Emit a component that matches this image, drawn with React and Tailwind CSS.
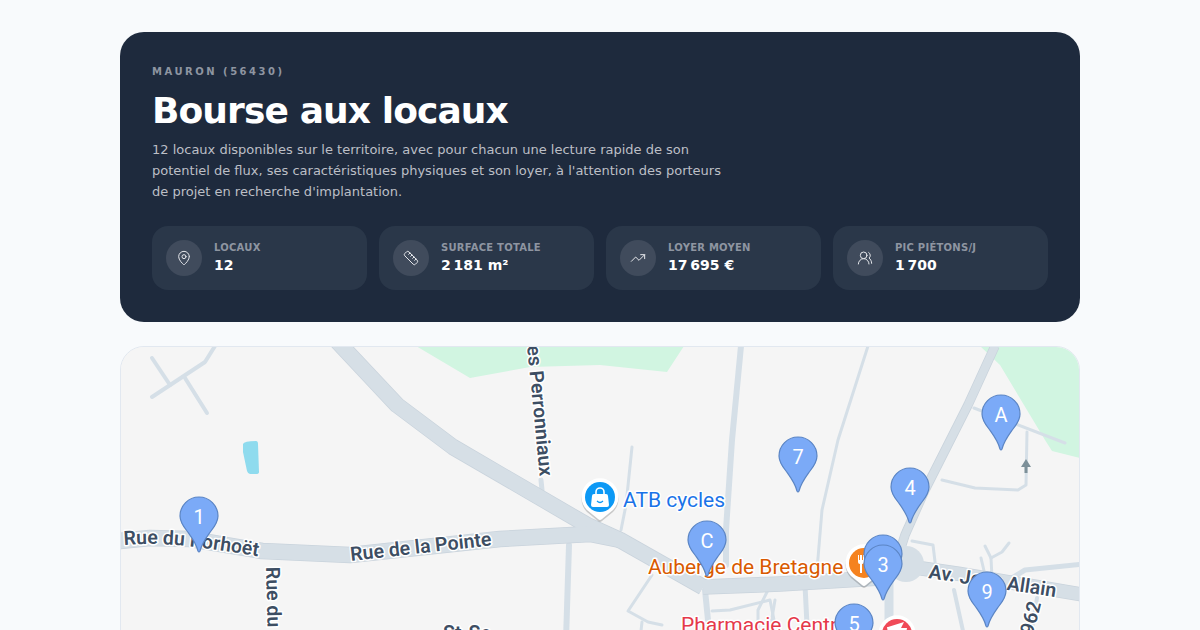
import { MapPin, Ruler, TrendingUp, UsersRound } from 'lucide-react';

const stats = [
  { label: 'Locaux', value: '12', Icon: MapPin },
  { label: 'Surface totale', value: '2\u202f181 m²', Icon: Ruler },
  { label: 'Loyer moyen', value: '17\u202f695 €', Icon: TrendingUp },
  { label: 'Pic piétons/j', value: '1\u202f700', Icon: UsersRound },
];

// main roads: [path, width]
const roads = [
  ['M336 340 L397 405 L453 447 L587 525 L620 540 L703 587', 15],
  ['M120 541 L150 538 L190 539 L262 551 L350 555 L500 539 L590 534 L620 540', 15],
  ['M703 587 L780 584 L880 578 L905 566', 14],
  ['M905 566 L960 574 L1085 595', 13],
  ['M995 346 L968 405 L925 490 L905 535 L897 560', 8],
];

const lanes = [
  ['M152 397 L205 362 L215 346', 4],
  ['M152 358 L170 385', 4],
  ['M185 378 L207 413', 4],
  ['M541 480 L542 490', 5],
  ['M632 447 L626 505 L621 530', 3],
  ['M741 346 L732 440 L726 530 L726 565', 6],
  ['M569 545 L566 640', 6],
  ['M652 575 L628 611 L648 622 L662 625', 3],
  ['M642 622 L640 640', 3],
  ['M705 590 L710 640', 6],
  ['M712 611 L730 610 L770 600 L775 625', 3],
  ['M768 590 L758 610 L758 640', 3],
  ['M775 600 L770 630', 3],
  ['M805 585 L807 625', 5],
  ['M868 346 L838 440 L822 510 L817 570', 3],
  ['M974 408 L1065 443', 3],
  ['M942 480 L975 488 L1018 490 L1026 485 L1027 432', 3],
  ['M912 541 L933 545 L936 570', 3],
  ['M981 558 L985 575', 3],
  ['M985 546 L991 558 L1002 552 L1009 543', 3],
  ['M991 558 L992 578', 3],
  ['M954 590 L965 640', 4],
  ['M1012 578 L1025 570 L1085 564', 5],
  ['M889 575 L889 640', 9],
  ['M1037 598 L1030 640', 4],
];

// pins, bottom to top
const pins = [
  { x: 199, y: 497, label: '1' },
  { x: 707, y: 521, label: 'C' },
  { x: 798, y: 437, label: '7' },
  { x: 910, y: 468, label: '4' },
  { x: 1001, y: 395, label: 'A' },
  { x: 883, y: 535, label: '' },
  { x: 883, y: 545, label: '3' },
  { x: 987, y: 572, label: '9' },
  { x: 854, y: 604, label: '5' },
];

const roboto = { fontFamily: 'Roboto, sans-serif' };

function Pin({ x, y, label }) {
  return (
    <g transform={`translate(${x} ${y})`}>
      <path
        d="M-1 54 C-3 46 -7 41 -12 34 C-16 29 -19 25 -19 19 A19 19 0 0 1 19 19 C19 25 16 29 12 34 C7 41 3 46 1 54 Q0 56 -1 54 Z"
        fill="#7baaf7"
        stroke="#5b85c4"
        strokeWidth="1.2"
      />
      <text x="0" y="26.500" textAnchor="middle" fontSize="20" fill="#ffffff" style={roboto}>{label}</text>
    </g>
  );
}

function Poi({ x, y, color }) {
  const shape = 'M-2 22 L-13 13 A18.500 18.500 0 1 1 13 13 L2 22 Q0 24 -2 22 Z';
  return (
    <g transform={`translate(${x} ${y})`}>
      <path d={shape} fill="#000000" opacity="0.18" transform="translate(0 2)" />
      <path d={shape} fill="#ffffff" />
      <circle cx="0" cy="0" r="15" fill={color} />
    </g>
  );
}

function MapCanvas() {
  return (
    <svg viewBox="121 347 958 460" className="block w-full h-[460px]">
      <rect x="121" y="347" width="958" height="460" fill="#f5f5f5" />
      <path d="M416 346 L470 378 L530 367 L600 365 L667 372 L684 346 Z" fill="#d1f5e1" />
      <path d="M980 346 L1080 346 L1080 458 L1052 451 L1045 440 L1000 365 Z" fill="#d1f5e1" />
      <path d="M243 444 Q244 441 256 441 Q258 441 258 444 L259 472 Q259 474 256 474 L250 474 Q248 474 247 471 L243 452 Z" fill="#8fdbee" />

      {lanes.map(([d, w], i) => (
        <path key={i} d={d} fill="none" stroke="#d5dfe7" strokeWidth={w} strokeLinecap="round" strokeLinejoin="round" />
      ))}
      {roads.map(([d, w], i) => (
        <path key={i} d={d} fill="none" stroke="#c9d3dc" strokeWidth={w + 1.5} strokeLinejoin="round" />
      ))}
      {roads.map(([d, w], i) => (
        <path key={i} d={d} fill="none" stroke="#d6dfe6" strokeWidth={w} strokeLinejoin="round" />
      ))}
      <circle cx="906" cy="564" r="18" fill="#d6dfe6" />
      <path d="M1026 459 L1031 467 L1027.500 467 L1027.500 473 L1024.500 473 L1024.500 467 L1021 467 Z" fill="#7d9099" />

      <defs>
        <path id="porhoet" d="M124 545 C160 542 190 545 262 557" />
        <path id="pointe" d="M351 561 L495 545" />
        <path id="perron" d="M527 346 L531 385 L540 480" />
        <path id="ruedu" d="M266 567 L268 640" />
        <path id="allain" d="M928 578 L1062 598" />
        <path id="d962" d="M1030 648 L1041 604" />
      </defs>
      <g fontSize="19.500" fontWeight="600" fill="#3d4e63" stroke="#ffffff" strokeWidth="3" strokeLinejoin="round" style={{ ...roboto, paintOrder: 'stroke' }}>
        <text><textPath href="#porhoet">Rue du Porhoët</textPath></text>
        <text><textPath href="#pointe">Rue de la Pointe</textPath></text>
        <text><textPath href="#perron">es Perronniaux</textPath></text>
        <text><textPath href="#ruedu">Rue du</textPath></text>
        <text><textPath href="#allain">Av. Jean Allain</textPath></text>
        <text><textPath href="#d962">D962</textPath></text>
        <text x="443" y="640">St-Se</text>
      </g>

      <Poi x={600} y={497} color="#0d99f5" />
      <path d="M592 496 Q592 494 594 494 H606 Q608 494 608 496 L609 505 Q609 507 607 507 H593 Q591 507 591 505 Z" fill="#ffffff" />
      <path d="M596 494 V492 A4 4 0 0 1 604 492 V494" fill="none" stroke="#ffffff" strokeWidth="1.600" />
      <path d="M597 501 Q600 504 603 501" fill="none" stroke="#0d99f5" strokeWidth="1.200" />

      <Poi x={864} y={563} color="#f5821f" />
      <path d="M858 555 V562 Q858 564 860 564 V573 H862 V564 Q864 564 864 562 V555 H863 V560 H862 V555 H860 V560 H859 V555 Z" fill="#ffffff" />

      <Poi x={897} y={634} color="#f04a58" />
      <path d="M888 627 L904 622 L901 628 H907 Q906 636 900 639 H894 Q888 636 887 627 Z" fill="#ffffff" />

      <g fontSize="21" stroke="#ffffff" strokeWidth="3" strokeLinejoin="round" style={{ ...roboto, paintOrder: 'stroke' }}>
        <text x="623" y="507" fill="#1a73e8">ATB cycles</text>
        <text x="648" y="574" fill="#d95a00">Auberge de Bretagne</text>
        <text x="681" y="632" fill="#e5394a">Pharmacie Centrale</text>
      </g>

      {pins.map((p, i) => (
        <Pin key={i} {...p} />
      ))}
    </svg>
  );
}

export default function App() {
  return (
    <div className="bg-[#f8fafc] pt-8 h-[630px] overflow-hidden" style={{ fontFamily: '"DejaVu Sans", sans-serif' }}>
      <div className="mx-auto w-[960px] space-y-6">
        <header className="rounded-3xl bg-[#1e2a3d] p-8 h-[290px]">
          <p className="text-[10px] leading-[15px] font-bold uppercase tracking-[0.25em] text-[#8e95a1]">Mauron (56430)</p>
          <h1 className="mt-2 text-4xl leading-[48px] font-bold tracking-tight text-white">Bourse aux locaux</h1>
          <p className="mt-1 max-w-xl text-[13px] leading-[21px] text-[#bcbfc6]">
            12 locaux disponibles sur le territoire, avec pour chacun une lecture rapide de son potentiel de flux, ses caractéristiques physiques et son loyer, à l'attention des porteurs de projet en recherche d'implantation.
          </p>
          <div className="mt-6 grid grid-cols-4 gap-3">
            {stats.map(({ label, value, Icon }) => (
              <div key={label} className="flex items-center gap-3 rounded-2xl bg-[#2a3749] p-3.5 h-16">
                <div className="flex h-9 w-9 items-center justify-center rounded-full bg-[#404b5c]">
                  <Icon size={16} strokeWidth={1.5} className="text-[#e5e7eb]" />
                </div>
                <div className="mb-0.5">
                  <p className="text-[10px] leading-[15px] font-bold uppercase tracking-wide text-[#8e95a1]">{label}</p>
                  <p className="text-sm leading-5 font-bold text-white">{value}</p>
                </div>
              </div>
            ))}
          </div>
        </header>
        <section className="overflow-hidden rounded-3xl border border-[#e2e8f0] bg-[#f5f5f5]">
          <MapCanvas />
        </section>
      </div>
    </div>
  );
}
